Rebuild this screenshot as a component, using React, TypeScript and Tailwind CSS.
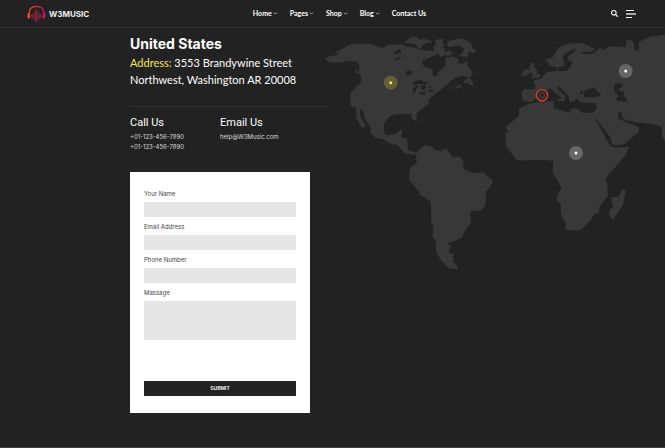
import { ChevronDown } from "lucide-react";
import { FaSearch } from "react-icons/fa";

const menu = ["Home", "Pages", "Shop", "Blog"];

const fields = [
  { id: "name", label: "Your Name", type: "text" },
  { id: "email", label: "Email Address", type: "email" },
  { id: "phone", label: "Phone Number", type: "tel" },
];

function Logo() {
  return (
    <a href="#" className="flex items-center gap-[3px] text-[8px] font-bold leading-none text-[#eeeeee]">
      <svg viewBox="0 0 57 54" className="h-[18px] w-[19px]" aria-hidden="true">
        <defs>
          <linearGradient id="band" x1="0" x2="1" y1="0" y2="0">
            <stop offset="0" stopColor="#ff4a22" />
            <stop offset="0.5" stopColor="#e8203c" />
            <stop offset="1" stopColor="#d80f66" />
          </linearGradient>
        </defs>
        <path d="M6 27C6 12 15 4 28.500 4S51 12 51 27" fill="none" stroke="url(#band)" strokeWidth="3.500" />
        <path d="M2 25q5-4 7 0v14q-4 4-8-2zM48 25q4-4 7 1v11q-3 6-7 2z" fill="url(#band)" />
        <path
          d="M13 31v5M17 29v9M21 24v18M25 17v29M29 13v39M33 20v23M37 26v15M41 29v9M45 32v4"
          stroke="#a8263a"
          strokeWidth="2.500"
          strokeLinecap="round"
        />
      </svg>
      W3MUSIC
    </a>
  );
}

function Marker({ x, y, halo, dot }: { x: number; y: number; halo: string; dot: string }) {
  return (
    <g>
      <circle cx={x} cy={y} r="21" fill={halo} />
      <circle cx={x} cy={y} r="4.500" fill={dot} />
    </g>
  );
}

function WorldMap() {
  return (
    <svg viewBox="328 28 337 245" className="block h-auto w-full overflow-visible" role="img" aria-label="World map">
      <g transform="translate(315 30) scale(0.33333)">
        <g fill="#383838">
          <path d="M30 85L42 79L62 77L72 71L57 68L85 55L112 41L165 41L195 52L207 54L214 44L262 43L275 50L290 50L300 55L318 59L345 62L362 62L372 70L350 80L322 93L323 104L333 112L352 118L354 138L364 138L370 125L391 109L392 84L410 79L429 86L430 100L443 101L456 92L458 108L473 128L470 137L456 142L440 137L420 145L408 152L388 171L360 192L340 208L341 222L322 236L305 250L305 275L290 266L289 253L240 253L222 260L208 280L205 300L213 315L238 313L250 304L262 297L262 307L257 322L277 326L279 360L303 368L313 357L330 345L352 350L358 360L375 362L383 361L388 354L400 362L411 380L436 381L445 395L446 417L472 428L508 428L517 441L533 450L532 460L514 484L510 529L496 542L471 542L465 552L468 578L452 600L439 624L418 634L400 638L400 644L409 649L401 662L404 669L416 672L413 696L428 709L428 716L404 716L380 694L363 666L363 634L352 620L356 585L349 584L348 515L329 502L314 496L312 485L282 449L285 413L305 398L303 374L273 371L247 346L225 340L211 333L208 328L180 323L165 306L168 295L151 270L143 240L135 240L136 260L151 286L150 293L139 291L124 265L124 235L106 227L106 191L138 156L138 137L132 128L133 104L123 94L90 93L80 98L42 97Z" />
          <path d="M265 38L287 22L305 21L314 30L328 26L349 32L350 39L337 38L319 48L322 55L309 56L302 43Z" />
          <path d="M361 29L385 26L382 39L392 43L382 50L391 61L387 78L377 80L370 70L356 67L358 54L352 51L362 45Z" />
          <path d="M396 40L402 32L440 25L460 34L470 41L471 54L484 61L481 69L460 67L460 82L431 78L442 69L447 57L438 48L421 47L407 51L397 48Z" />
          <path d="M385 68L402 62L415 68L403 78L390 75ZM447 152L458 146L460 139L473 154L476 164L465 165L461 160L447 159ZM420 170L437 163L439 170L425 177ZM402 174L411 170L409 179ZM121 121L130 122L132 131L122 132Z" />
        </g>
        <path
          fill="#222222"
          d="M236 66L247 62L248 58L259 59L258 68L240 72ZM238 86L256 80L257 87L239 91ZM272 126L281 121L291 124L288 135L278 137L272 131ZM293 159L304 152L321 149L325 156L338 157L337 163L317 162L295 164ZM293 187L295 174L309 165L310 170L302 179L301 187ZM317 168L329 164L334 174L325 180L320 176ZM312 189L332 184L331 192L318 195ZM339 167L350 171L346 176ZM340 181L354 178L355 185L344 187Z"
        />
        <g fill="#383838">
          <g transform="translate(525 0)">
            <path d="M165 91L190 80L205 53L233 41L277 39L315 57L305 65L277 66L277 72L310 71L325 57L332 50L337 60L360 49L407 52L410 31L424 30L431 39L434 62L446 60L447 36L480 20L525 14V332L516 320L515 291L501 285L421 274L403 268L397 262L396 248L385 246L385 266L447 292V304L405 342L377 346L365 341L362 323L338 292L320 269L316 271L360 345L375 353L417 350L407 375L345 448L345 390H80L49 350V319L55 302L45 292L87 258V236L117 221L145 217L191 212V235L240 248L241 237L260 235L277 248H310L320 237V224L314 218L283 219L267 213L261 204L251 215H238L236 197L218 180L207 169L202 169L205 180L226 199L225 212L209 213L202 208L216 204L190 184L180 174L172 181L151 188L133 210L125 216L102 213L96 206V184L103 177L134 178L138 168L132 162L133 151L153 146L170 126L202 122L200 111L178 108L175 97Z" />
            <path d="M116 112L126 98L134 100L133 112L141 120L140 128L154 137L145 144L122 143L132 136L120 127ZM96 132L100 122L113 117L121 126L114 135L98 139Z" />
          </g>
          <g transform="translate(555 210)">
            <path d="M17 100L90 60H350L387 140L350 196L315 233L321 249L324 287L297 322V338L283 342L273 360L242 391H197V367L183 346L182 312L171 304L170 289L184 263L157 216L160 183L136 180L128 171H110L103 179L55 182L18 139Z" />
            <path d="M334 291L355 292L366 270H378L369 315L339 359L328 348V334L341 317L334 306Z" />
          </g>
        </g>
        <g transform="translate(525 0)" fill="#222222">
          <path d="M205 112L222 108V96L217 84L228 68L253 56L257 61L235 80L233 91L249 96L241 109L231 123L202 123ZM281 188L293 177L311 175L313 169L318 181L332 192L328 199L310 202L283 201ZM270 187L278 180L279 191L271 194ZM372 166L384 158L397 162L398 171L389 173L387 182L402 185L401 198L411 208L408 216L380 212L379 204L386 198L373 184Z" />
          <path d="M316 266L321 269L338 292L362 323L365 341L377 346L405 342L425 329L450 306L455 320L420 350L375 353L360 347Z" />
        </g>
        <Marker x={227} y={158} halo="#625f38" dot="#fff05a" />
        <Marker x={932} y={123} halo="#666666" dot="#ffffff" />
        <Marker x={783} y={369} halo="#666666" dot="#ffffff" />
        <circle cx="681" cy="196" r="17" fill="#282828" stroke="#e03a20" strokeWidth="4" />
        <circle cx="681" cy="196" r="8" fill="none" stroke="#555555" strokeWidth="2" />
      </g>
    </svg>
  );
}

export default function App() {
  return (
    <div className="flex min-h-screen flex-col overflow-x-hidden border-b border-[#444444] bg-[#222222] font-['Inter','Liberation_Sans',sans-serif] text-white">
      <header className="grid h-7 grid-cols-[1fr_auto_1fr] items-center border-b border-[#303030] pl-[27px] pr-[29px]">
        <Logo />
        <nav className="ml-4 flex items-center gap-3 font-['Lato',sans-serif] text-[7px] font-bold leading-none">
          {menu.map((item) => (
            <a key={item} href="#" className="flex items-center gap-px">
              {item}
              <ChevronDown className="size-[5px]" strokeWidth={3} />
            </a>
          ))}
          <a href="#">Contact Us</a>
        </nav>
        <div className="flex items-center justify-end gap-2">
          <button type="button" aria-label="Search">
            <FaSearch className="size-[7px]" />
          </button>
          <button type="button" aria-label="Menu" className="flex flex-col gap-[2px]">
            <span className="h-px w-2 bg-white" />
            <span className="h-[2px] w-[10px] bg-[#aaaaaa]" />
            <span className="h-px w-[6px] bg-white" />
          </button>
        </div>
      </header>

      <main className="flex items-start pb-[34px] pl-[130px]">
        <div className="w-[198px] shrink-0">
          <section className="border-b border-[#303030] pb-[18px] pt-2">
            <h1 className="text-[14px] font-bold leading-4">United States</h1>
            <p className="mt-[2px] whitespace-nowrap font-['Lato',sans-serif] text-[11px] leading-[17px]">
              <span className="text-[#f5e84f]">Address:</span> 3553 Brandywine Street
              <br />
              Northwest, Washington AR 20008
            </p>
          </section>
          <section className="flex pt-[9px] text-[6px] leading-[10px] text-[#d8d8d8]">
            <div className="w-[90px]">
              <h2 className="mb-[2px] font-['Roboto',sans-serif] text-[11px] leading-[14px] text-white">Call Us</h2>
              <p>+01-123-456-7890</p>
              <p>+01-123-456-7890</p>
            </div>
            <div>
              <h2 className="mb-[2px] font-['Roboto',sans-serif] text-[11px] leading-[14px] text-white">Email Us</h2>
              <a href="mailto:help@W3Music.com" className="block">help@W3Music.com</a>
            </div>
          </section>

          <form className="mt-5 w-[180px] bg-white px-[14px] pb-[17px] pt-4 text-[6px] text-[#444444]">
            {fields.map((field) => (
              <div key={field.id} className="mb-1">
                <label htmlFor={field.id} className="mb-[3px] block leading-[11px]">{field.label}</label>
                <input id={field.id} type={field.type} className="block h-[15px] w-full bg-[#e6e6e6] px-1 outline-none" />
              </div>
            ))}
            <label htmlFor="message" className="mb-[3px] block leading-[11px]">Massage</label>
            <textarea id="message" className="block h-[39px] w-full resize-none bg-[#e6e6e6] p-1 outline-none" />
            <button type="submit" className="mt-[41px] block h-[15px] w-full bg-[#222222] text-[5px] font-semibold leading-none text-white">
              SUBMIT
            </button>
          </form>
        </div>
        <div className="min-w-0 flex-1">
          <WorldMap />
        </div>
      </main>
    </div>
  );
}
